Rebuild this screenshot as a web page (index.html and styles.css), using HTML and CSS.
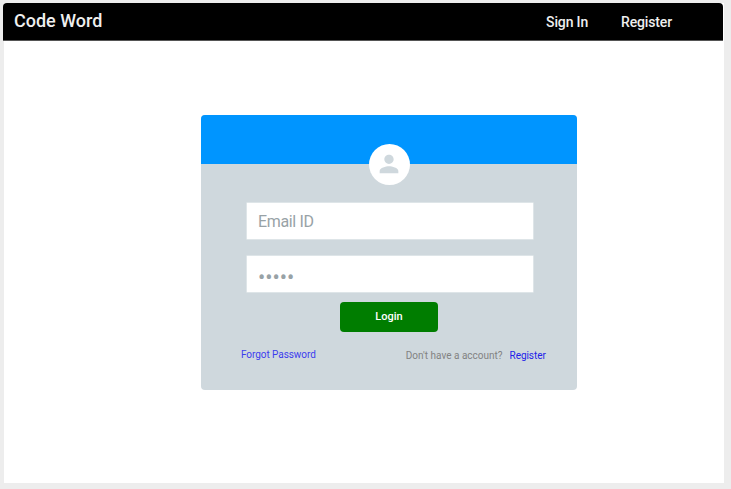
FILE: index.html
```html
<!DOCTYPE html>
<html lang="en">
<head>
<meta charset="utf-8">
<title>Code Word</title>
<link rel="stylesheet" href="styles.css">
</head>
<body>
<div class="page">
  <header class="navbar">
    <span class="brand">Code Word</span>
    <nav class="nav">
      <a class="nav-link">Sign In</a>
      <a class="nav-link">Register</a>
    </nav>
  </header>
  <main class="card">
    <div class="card-top">
      <div class="avatar">
        <svg viewBox="0 0 24 24" width="28" height="28"><path fill="#cfd8dd" d="M12 12c2.21 0 4-1.79 4-4s-1.79-4-4-4-4 1.790-4 4 1.790 4 4 4zm0 2c-2.670 0-8 1.340-8 4v2h16v-2c0-2.660-5.330-4-8-4z"/></svg>
      </div>
    </div>
    <form class="form">
      <div class="field"><span class="placeholder">Email ID</span></div>
      <div class="field"><span class="dots">•••••</span></div>
      <button class="login" type="button">Login</button>
      <div class="links">
        <a class="forgot">Forgot Password</a>
        <span class="question">Don't have a account?</span>
        <a class="join">Register</a>
      </div>
    </form>
  </main>
</div>
</body>
</html>
```
FILE: styles.css
```css
* { box-sizing: border-box; }
body {
  margin: 0;
  padding: 3px 7px 6px 3px;
  height: 489px;
  background: #ededed;
  font-family: Roboto, "Liberation Sans", sans-serif;
  overflow: hidden;
}
.page {
  height: 480px;
  background: linear-gradient(#fff, #fff) 1px 0 / 100% 100% no-repeat;
}
.navbar {
  width: 720px;
  height: 38px;
  padding: 0 51px 0 11px;
  display: flex;
  justify-content: space-between;
  align-items: center;
  background: #000;
  border: 1px solid #555;
  border-width: 0 0 1px;
  border-radius: 4px 4px 0 0;
  color: #efefef;
}
.brand { font-size: 18px; font-weight: 500; padding-bottom: 2px; }
.nav { display: flex; gap: 33px; padding-top: 1px; }
.nav-link {
  font-size: 14px;
  font-weight: 500;
  letter-spacing: -0.15px;
  white-space: nowrap;
}
.card {
  width: 376px;
  height: 275px;
  margin: 74px 0 0 198px;
  background: #cfd8dd;
  border-radius: 4px;
}
.card-top {
  height: 49px;
  padding-top: 29px;
  display: flex;
  justify-content: center;
  background: #0095ff;
  border-radius: 4px 4px 0 0;
}
.avatar {
  width: 41px;
  height: 41px;
  padding-bottom: 1px;
  display: flex;
  align-items: center;
  justify-content: center;
  background: #fff;
  border-radius: 50%;
}
.avatar svg { display: block; }
.form { padding: 39px 44px 0 46px; }
.field {
  height: 36px;
  margin-bottom: 17.400px;
  padding-left: 11px;
  display: flex;
  align-items: center;
  background: #fff;
  box-shadow: 0 0 0 0.500px #edf1f3;
  color: #98a2a6;
}
.placeholder { font-size: 16px; letter-spacing: -0.35px; padding-top: 1px; }
.dots { font-size: 21.500px; line-height: 24px; padding-top: 7px; }
.login {
  display: block;
  width: 98px;
  height: 30px;
  margin: -8px 0 0 93px;
  padding: 0;
  border: 0;
  border-radius: 4px;
  background: #007d00;
  color: #fff;
  font: 500 11px Roboto, sans-serif;
}
.links {
  display: flex;
  margin: 14px -20px 0 -6px;
  font-size: 10px;
  line-height: 16px;
  letter-spacing: -0.06px;
  white-space: nowrap;
}
.forgot { padding-top: 1px; color: #3c3cee; }
.question { margin: 2px 7px 0 90px; letter-spacing: 0; color: #828282; }
.join { margin-top: 2px; color: #2222e8; }
```
